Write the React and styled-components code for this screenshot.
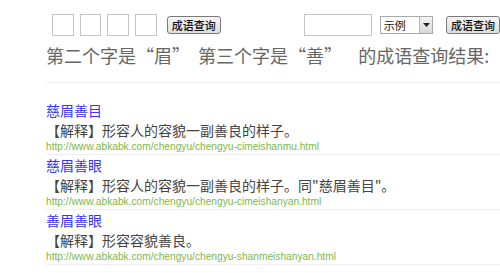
import React from "react";
import styled, { createGlobalStyle } from "styled-components";

const GlobalStyle = createGlobalStyle`
  body {
    margin: 0;
    background: #fff;
    font-family: "Liberation Sans", "Noto Sans CJK SC", sans-serif;
  }
`;

const Page = styled.div`
  width: 500px;
  height: 273px;
  overflow: hidden;
  padding: 14px 0 0 46px;
  box-sizing: border-box;
`;

const Toolbar = styled.div`
  display: flex;
  align-items: center;
  height: 22px;
  padding-left: 6px;
  white-space: nowrap;
`;

const CharBox = styled.div`
  width: 22px;
  height: 22px;
  box-sizing: border-box;
  border: 1px solid #c4c4c4;
  margin-right: ${(p) => p.$gap || 6}px;
  background: #fff;
`;

const TextBox = styled.div`
  width: 69px;
  height: 22px;
  box-sizing: border-box;
  border: 1px solid #c4c4c4;
  margin-left: ${(p) => p.$offset}px;
`;

const Button = styled.div`
  width: 54px;
  height: 18px;
  box-sizing: border-box;
  margin-left: ${(p) => p.$offset}px;
  border: 1px solid #7a7a7a;
  border-radius: 3px;
  background: linear-gradient(#f6f6f6, #dedede);
  font-family: "Noto Sans CJK SC", sans-serif;
  font-size: 11px;
  font-weight: 500;
  line-height: 16px;
  text-align: center;
  color: #111;
  flex-shrink: 0;
`;

const Select = styled.div`
  display: flex;
  width: 54px;
  height: 18px;
  box-sizing: border-box;
  margin-left: 8px;
  border: 1px solid #a9a9a9;
  background: #fff;
`;

const SelectText = styled.span`
  flex: 1;
  padding-left: 3px;
  font-family: "Noto Sans CJK SC", sans-serif;
  font-size: 11px;
  line-height: 16px;
  color: #111;
`;

const SelectArrow = styled.span`
  width: 12px;
  display: flex;
  align-items: center;
  justify-content: center;
  border-left: 1px solid #b5b5b5;
  background: linear-gradient(#f4f4f4, #d8d8d8);
`;

const Heading = styled.div`
  margin-top: 7px;
  padding-bottom: 15px;
  border-bottom: 1px solid #eee;
  font-family: "Noto Sans CJK SC", sans-serif;
  font-size: 18px;
  line-height: 24px;
  color: #666;
  white-space: pre;
`;

const Results = styled.div`
  padding-top: 17px;
`;

const Item = styled.div`
  border-bottom: 1px solid #eee;
`;

const Title = styled.a`
  display: block;
  font-family: "Noto Sans CJK SC", sans-serif;
  font-size: 14px;
  line-height: 20px;
  color: #3737f2;
  text-decoration: none;
`;

const Desc = styled.div`
  font-family: "Noto Sans CJK SC", sans-serif;
  font-size: 14px;
  line-height: 20px;
  color: #444;
  white-space: nowrap;
`;

const Url = styled.div`
  font-family: "Liberation Sans", sans-serif;
  font-size: 10.2px;
  line-height: 14px;
  color: #7fb64a;
  white-space: nowrap;
`;

const results = [
  {
    title: "慈眉善目",
    desc: "【解释】形容人的容貌一副善良的样子。",
    url: "http://www.abkabk.com/chengyu/chengyu-cimeishanmu.html",
  },
  {
    title: "慈眉善眼",
    desc: "【解释】形容人的容貌一副善良的样子。同\"慈眉善目\"。",
    url: "http://www.abkabk.com/chengyu/chengyu-cimeishanyan.html",
  },
  {
    title: "善眉善眼",
    desc: "【解释】形容容貌善良。",
    url: "http://www.abkabk.com/chengyu/chengyu-shanmeishanyan.html",
  },
];

export default function App() {
  return (
    <Page>
      <GlobalStyle />
      <Toolbar>
        <CharBox />
        <CharBox />
        <CharBox />
        <CharBox $gap={10} />
        <Button $offset={0}>成语查询</Button>
        <TextBox $offset={83} />
        <Select>
          <SelectText>示例</SelectText>
          <SelectArrow>
            <svg width="7" height="4" viewBox="0 0 7 4">
              <path d="M0 0h7L3.5 4z" fill="#222" />
            </svg>
          </SelectArrow>
        </Select>
        <Button $offset={13}>成语查询</Button>
      </Toolbar>
      <Heading>{"第二个字是\u201c眉\u201d  第三个字是\u201c善\u201d    的成语查询结果:"}</Heading>
      <Results>
        {results.map((r) => (
          <Item key={r.url}>
            <Title href="#">{r.title}</Title>
            <Desc>{r.desc}</Desc>
            <Url>{r.url}</Url>
          </Item>
        ))}
      </Results>
    </Page>
  );
}
